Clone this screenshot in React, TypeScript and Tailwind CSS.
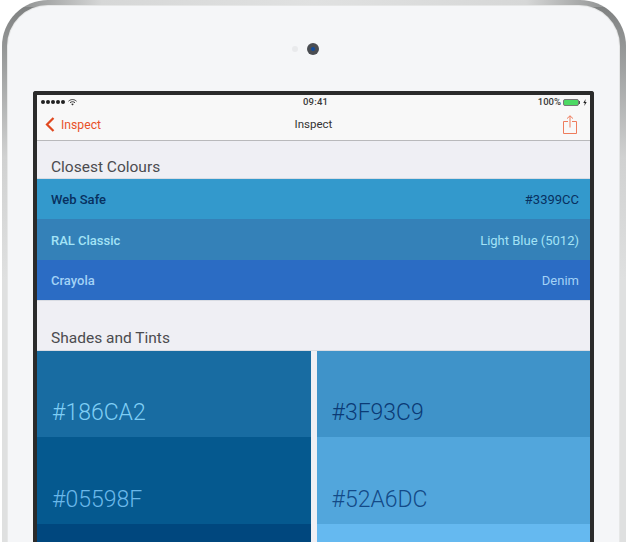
const sans = "font-['Roboto','Liberation_Sans',sans-serif]";

function Row({ name, value, bg, fg }: { name: string; value: string; bg: string; fg: string }) {
  return (
    <div className={`flex h-[40.33px] items-center justify-between pl-[14px] pr-[11px] pt-[2px] text-[13px] ${bg} ${fg}`}>
      <span className="font-medium">{name}</span>
      <span>{value}</span>
    </div>
  );
}

function Tile({ label, bg, fg, h }: { label: string; bg: string; fg: string; h: string }) {
  return (
    <div className={`flex items-end pb-[11px] pl-[15px] text-[23px] font-light leading-[26px] ${h} ${bg} ${fg}`}>
      {label}
    </div>
  );
}

export default function App() {
  return (
    <div className={`h-[542px] w-[630px] overflow-hidden bg-white pl-[2px] ${sans}`}>
      <div className="h-[560px] w-[624px] rounded-t-[46px] pl-[6px] pr-[7px] pt-[6px] [background:linear-gradient(90deg,#808282_0%,#d6d7d7_16%,#e0e1e1_50%,#d6d7d7_84%,#808282_100%)_top/100%_7px_no-repeat,linear-gradient(180deg,#7c7e7e_0%,#9fa1a1_12%,#d0d1d1_28%,#dfe0e0_50%)]">
        <div className="h-full rounded-t-[40px] bg-[#f5f6f8] shadow-[0_0_0_1px_#e6e7e7]">
          <div className="flex h-[85px] items-start pl-[284px] pt-[37px]">
            <div className="flex items-center gap-[9px]">
              <div className="h-[6px] w-[6px] rounded-full bg-[#e9eaec]" />
              <div className="flex h-[12px] w-[12px] items-center justify-center rounded-full bg-[#4a4d52]">
                <div className="h-[4px] w-[4px] rounded-full bg-[#0f4a9e]" />
              </div>
            </div>
          </div>
          <div className="ml-[25px] h-[470px] w-[561px] rounded-t-[3px] border-x-4 border-t-4 border-[#2b2b2b] bg-[#efeff4]">
            <div className="bg-[#f8f8f8]">
              <div className="relative flex h-[14px] items-center justify-between pl-[4px] pr-[3px] text-[9.5px] font-medium text-[#3a3a3a]">
                <div className="flex items-center gap-[1px]">
                  {[0, 1, 2, 3, 4].map((i) => (
                    <div key={i} className="h-[4px] w-[4px] rounded-full bg-[#222]" />
                  ))}
                  <svg width="9" height="7" viewBox="0 0 9 7" className="ml-[2px]">
                    <path d="M0.5 2.2C3 0 6 0 8.5 2.2M2 3.7C3.5 2.4 5.5 2.4 7 3.7" fill="none" stroke="#333" strokeWidth="1" />
                    <path d="M3.2 5L4.5 6.6L5.8 5C5 4.3 4 4.3 3.2 5Z" fill="#333" />
                  </svg>
                </div>
                <span className="absolute left-[266px] tracking-[0.2px]">09:41</span>
                <div className="flex items-center gap-[2px]">
                  <span>100%</span>
                  <div className="flex items-center">
                    <div className="h-[7px] w-[16px] rounded-[2px] border border-[#777] bg-[#4cd964]" />
                    <div className="h-[3px] w-[1px] bg-[#555]" />
                  </div>
                  <svg width="4" height="7" viewBox="0 0 4 7" className="ml-[1px]">
                    <path d="M2.6 0L0.3 3.9H1.8L1.3 7L3.7 3H2.2Z" fill="#222" />
                  </svg>
                </div>
              </div>
              <div className="relative flex h-[32px] items-center justify-between border-b border-[#b9b9bb] pl-[8px] pr-[13px]">
                <div className="flex items-center gap-[6px] text-[12.2px] text-[#e8522a]">
                  <svg width="10" height="15" viewBox="0 0 10 15">
                    <path d="M8.5 1L2 7.5L8.5 14" fill="none" stroke="#e0481f" strokeWidth="2.2" />
                  </svg>
                  <span className="pt-[1px]">Inspect</span>
                </div>
                <span className="absolute left-0 right-0 pt-[1px] text-center text-[11.5px] text-[#333]">Inspect</span>
                <svg width="14" height="19" viewBox="0 0 14 19">
                  <path d="M5 6.5H0.5V18.5H13.5V6.5H9M7 12.5V0.8M4 3.6L7 0.8L10 3.6" fill="none" stroke="#ee7c5c" strokeWidth="1" />
                </svg>
              </div>
            </div>
            <div className="flex h-[37px] items-end pb-[2px] pl-[14px] text-[15.5px] leading-[18px] text-[#4b4b4f]">Closest Colours</div>
            <div className="border-y border-[#d9dce3]">
              <Row name="Web Safe" value="#3399CC" bg="bg-[#3399cc]" fg="text-[#08305f]" />
              <Row name="RAL Classic" value="Light Blue (5012)" bg="bg-[#3481b8]" fg="text-[#a3e3f6]" />
              <Row name="Crayola" value="Denim" bg="bg-[#2b6cc4]" fg="text-[#a3d2f6]" />
            </div>
            <div className="flex h-[49px] items-end pb-[2px] pl-[14px] text-[15.5px] leading-[20px] text-[#4b4b4f]">Shades and Tints</div>
            <div className="grid grid-cols-2 gap-[6px] border-t border-[#d9dce3]">
              <div>
                <Tile label="#186CA2" bg="bg-[#186ca2]" fg="text-[#7fcef5]" h="h-[86px]" />
                <Tile label="#05598F" bg="bg-[#05598f]" fg="text-[#6bb8ea]" h="h-[87px]" />
                <div className="h-[30px] bg-[#00477e]" />
              </div>
              <div>
                <Tile label="#3F93C9" bg="bg-[#3f93c9]" fg="text-[#0b3a75]" h="h-[86px]" />
                <Tile label="#52A6DC" bg="bg-[#52a6dc]" fg="text-[#134a88]" h="h-[87px]" />
                <div className="h-[30px] bg-[#65b9f0]" />
              </div>
            </div>
          </div>
        </div>
      </div>
    </div>
  );
}
